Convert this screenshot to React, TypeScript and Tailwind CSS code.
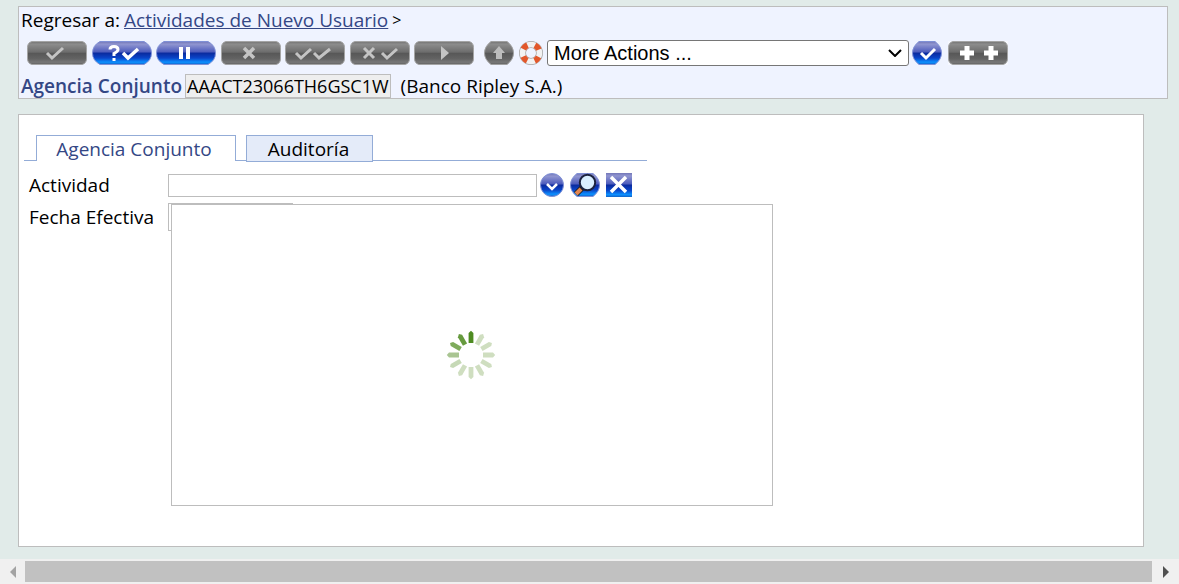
import React from "react";

type GlyphName = "check" | "query" | "pause" | "cross" | "double" | "crosscheck" | "play" | "plus";

function Defs() {
  return (
    <svg width="0" height="0" className="absolute" aria-hidden="true">
      <defs>
        <linearGradient id="gray" x1="0" y1="0" x2="0" y2="1">
          <stop offset="0" stopColor="#747474" />
          <stop offset="0.12" stopColor="#8c8c8c" />
          <stop offset="0.47" stopColor="#6c6c6c" />
          <stop offset="0.5" stopColor="#575757" />
          <stop offset="0.75" stopColor="#636363" />
          <stop offset="0.9" stopColor="#777777" />
          <stop offset="1" stopColor="#626262" />
        </linearGradient>
        <linearGradient id="blue" x1="0" y1="0" x2="0" y2="1">
          <stop offset="0" stopColor="#7377b8" />
          <stop offset="0.12" stopColor="#9095d0" />
          <stop offset="0.46" stopColor="#4c5bbc" />
          <stop offset="0.5" stopColor="#0a2a9e" />
          <stop offset="0.72" stopColor="#0a45c8" />
          <stop offset="0.9" stopColor="#0c90ff" />
          <stop offset="1" stopColor="#1263c8" />
        </linearGradient>
      </defs>
    </svg>
  );
}

function Glyph({ name }: { name: GlyphName }) {
  switch (name) {
    case "check":
      return <path d="M20 12l5 5 11-10" />;
    case "query":
      return (
        <>
          <path d="M18 8.500q0-3 4-3t4 3q0 2-4 4v2.500M22 17v3" strokeWidth="3" />
          <path d="M31 12l5 5 10-9" strokeWidth="3.500" />
        </>
      );
    case "pause":
      return <path d="M25 6v12M32 6v12" strokeWidth="4" />;
    case "cross":
      return <path d="M23 7l10 10M33 7L23 17" strokeWidth="3.500" />;
    case "double":
      return <path d="M11 12l5 5 10-9M29 12l5 5 11-9" />;
    case "crosscheck":
      return <path d="M14 7l10 10M24 7L14 17M32 12l5 5 10-9" />;
    case "play":
      return <path d="M27 5v14l8-7z" fill="currentColor" stroke="none" />;
    case "plus":
      return <path d="M19 5v14M12 12h14M43 5v14M36 12h14" strokeWidth="5" />;
  }
}

function Pill({ label, glyph, blue }: { label: string; glyph: GlyphName; blue?: boolean }) {
  return (
    <button type="button" aria-label={label} className={blue || glyph === "plus" ? "shrink-0 text-white" : "shrink-0 text-[#c4c4c4]"}>
      <svg width="60" height="24" viewBox="0 0 60 24" fill="none" stroke="currentColor" strokeWidth="3">
        <path
          d={blue ? "M8 .5h44q7.500 4 7.500 11.500t-7.500 11.500H8Q.5 19.500 .5 12T8 .5z" : "M5 .5h50q4.500 1 4.500 6v11q0 5-4.500 6H5q-4.500-1-4.500-6v-11q0-5 4.500-6z"}
          fill={blue ? "url(#blue)" : "url(#gray)"}
          stroke={blue ? "#7f90d6" : "#a4a4a4"}
          strokeWidth="1"
        />
        <Glyph name={glyph} />
      </svg>
    </button>
  );
}

const octagon = "M7 .5h16q6.500 5 6.500 11.500t-6.500 11.500H7Q.5 18.500 .5 12T7 .5z";
const petals = ["#4e8b22", "#cfdec0", "#cfdec0", "#cfdec0", "#cfdec0", "#cfdec0", "#cfdec0", "#cfdec0", "#c6d9b6", "#a9c592", "#7fab5c", "#669a3e"];

export default function App() {
  return (
    <div className="flex min-h-screen flex-col bg-[#e1ebe9] pt-[6px] font-['Open_Sans','Noto_Sans',sans-serif] text-[19px] leading-6 text-black">
      <Defs />
      <header className="mr-[11px] ml-[18px] border border-[#bdbdbd] bg-[#eff3ff]">
        <nav className="flex gap-1 pt-[1px] pl-[2px]">
          <span>Regresar a:</span>
          <a href="#actividades" className="text-[#344785] underline">Actividades de Nuevo Usuario</a>
          <span className="text-base leading-6">&gt;</span>
        </nav>
        <div className="mt-2 flex items-center pl-2">
          <div className="flex w-[447px] shrink-0 justify-between">
            <Pill label="Confirmar" glyph="check" />
            <Pill label="Validar" glyph="query" blue />
            <Pill label="Retener" glyph="pause" blue />
            <Pill label="Eliminar" glyph="cross" />
            <Pill label="Autorizar" glyph="double" />
            <Pill label="Reversar" glyph="crosscheck" />
            <Pill label="Continuar" glyph="play" />
          </div>
          <button type="button" aria-label="Volver" className="ml-[10px] shrink-0">
            <svg width="30" height="24" viewBox="0 0 30 24">
              <path d={octagon} fill="url(#gray)" stroke="#a0a0a0" />
              <path d="M15 5l6 7h-3v6h-6v-6H9z" fill="#bcbcbc" />
            </svg>
          </button>
          <button type="button" aria-label="Ayuda" className="ml-1 shrink-0">
            <svg width="26" height="24" viewBox="0 0 26 24" fill="none">
              <circle cx="13" cy="12" r="8.500" stroke="#a5a5a5" strokeWidth="7" />
              <circle cx="13" cy="12" r="8.500" stroke="#f2f2f2" strokeWidth="5.500" />
              <circle cx="13" cy="12" r="8.500" stroke="#e2572b" strokeWidth="6" strokeDasharray="5.800 7.550" strokeDashoffset="2.900" transform="rotate(45 13 12)" />
            </svg>
          </button>
          <div className="relative ml-[3px] h-[26px] w-[362px]">
            <select aria-label="More Actions" className="block h-[26px] w-full appearance-none rounded-[3px] border border-[#767676] bg-white pl-[6px] font-['Liberation_Sans',Arial,sans-serif] text-[20px] leading-6">
              <option>More Actions ...</option>
            </select>
            <svg width="14" height="8" viewBox="0 0 14 8" className="pointer-events-none absolute top-[9px] right-[7px]" aria-hidden="true">
              <path d="M1 1l6 6 6-6" fill="none" stroke="#000" strokeWidth="2" />
            </svg>
          </div>
          <button type="button" aria-label="Ejecutar" className="ml-[3px] shrink-0">
            <svg width="30" height="24" viewBox="0 0 30 24">
              <path d={octagon} fill="url(#blue)" stroke="#7f90d6" />
              <path d="M9 12l5 5 9-9" fill="none" stroke="#fff" strokeWidth="3" />
            </svg>
          </button>
          <div className="ml-[6px] flex bg-[#f6f8ff]">
            <Pill label="Expandir" glyph="plus" />
          </div>
        </div>
        <div className="mt-2 flex items-center pl-[2px]">
          <span className="font-semibold text-[#344785]">Agencia Conjunto</span>
          <span className="ml-[3px] border border-[#bdbdbd] bg-[#eee] px-[1px] text-[18px] leading-[22px]">AAACT23066TH6GSC1W</span>
          <span className="ml-[10px]">(Banco Ripley S.A.)</span>
        </div>
      </header>

      <main className="relative mt-[15px] mr-[35px] mb-3 ml-[18px] flex-1 border border-[#bdbdbd] bg-white pt-5 pl-[5px]">
        <div role="tablist" className="flex w-[623px] items-start">
          <span className="h-[26px] w-3 border-b border-[#93acd7]" />
          <button type="button" role="tab" aria-selected="true" className="h-[26px] w-[200px] border border-b-0 border-[#93acd7] pr-1 text-[#344785]">Agencia Conjunto</button>
          <span className="h-[26px] w-[10px] border-b border-[#93acd7]" />
          <button type="button" role="tab" aria-selected="false" className="h-[27px] w-[127px] border border-[#93acd7] bg-[#e4ebf9] pr-[2px]">Auditoría</button>
          <span className="h-[26px] flex-1 border-b border-[#93acd7]" />
        </div>
        <form className="flex flex-col gap-[6px] pt-[10px] pl-[5px]">
          <div className="flex h-[26px] items-center">
            <label htmlFor="actividad" className="w-[139px]">Actividad</label>
            <input id="actividad" className="h-[23px] w-[369px] border border-[#bdbdbd] px-1" />
            <button type="button" aria-label="Lista" className="ml-[3px]">
              <svg width="24" height="24" viewBox="0 0 24 24">
                <circle cx="12" cy="12" r="11.500" fill="url(#blue)" stroke="#7f90d6" />
                <path d="M7 11l5 5 5-5" fill="none" stroke="#fff" strokeWidth="2.500" />
              </svg>
            </button>
            <button type="button" aria-label="Buscar" className="ml-[6px]">
              <svg width="30" height="24" viewBox="0 0 30 24">
                <path d={octagon} fill="url(#blue)" stroke="#7f90d6" />
                <path d="M6 21l6-6" stroke="#222" strokeWidth="6" />
                <path d="M6 21l5-5" stroke="#e28650" strokeWidth="4" />
                <circle cx="17.500" cy="9.500" r="7.700" fill="#d9efff" stroke="#1b2340" strokeWidth="2" />
              </svg>
            </button>
            <button type="button" aria-label="Borrar" className="ml-[6px]">
              <svg width="26" height="24" viewBox="0 0 26 24">
                <path d="M0 0h26v24H0z" fill="url(#blue)" />
                <path d="M5 4l15 15M20 4L5 19" stroke="#fff" strokeWidth="3.500" />
              </svg>
            </button>
          </div>
          <div className="flex h-[26px] items-center">
            <label htmlFor="fecha" className="w-[139px]">Fecha Efectiva</label>
            <input id="fecha" className="h-7 w-[125px] border border-[#bdbdbd] px-1" />
          </div>
        </form>
        <div role="status" aria-label="Cargando" className="absolute top-[89px] left-[152px] flex h-[302px] w-[602px] items-center justify-center border border-[#bdbdbd] bg-white pr-[2px]">
          <svg width="50" height="50" viewBox="0 0 50 50">
            {petals.map((color, i) => (
              <path key={i} d="M22.600 3l2.400-2.200 2.400 2.200v10h-4.800z" fill={color} transform={`rotate(${i * 30} 25 25)`} />
            ))}
          </svg>
        </div>
      </main>

      <footer className="flex h-[25px] items-center bg-[#f0f0f0]">
        <button type="button" aria-label="Desplazar a la izquierda" className="flex w-[25px] justify-center">
          <svg width="6" height="12" viewBox="0 0 6 12"><path d="M6 0v12L0 6z" fill="#a3a3a3" /></svg>
        </button>
        <div className="h-[21px] flex-1 bg-[#c1c1c1]" />
        <button type="button" aria-label="Desplazar a la derecha" className="flex w-[27px] justify-center">
          <svg width="6" height="12" viewBox="0 0 6 12"><path d="M0 0v12l6-6z" fill="#505050" /></svg>
        </button>
      </footer>
    </div>
  );
}
